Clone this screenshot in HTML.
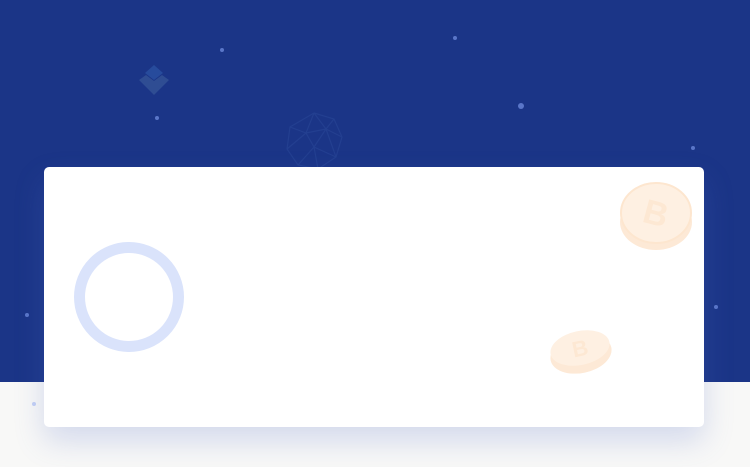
<!DOCTYPE html>
<html><head><meta charset="utf-8"><style>
html,body{margin:0;padding:0;width:750px;height:467px;overflow:hidden;background:#f8f8f7;font-family:"Liberation Sans",sans-serif}
.top{position:absolute;left:0;top:0;width:750px;height:382px;background:#1b3587}
.dot{position:absolute;border-radius:50%;background:#5a76c8}
.card{position:absolute;left:44px;top:167px;width:660px;height:260px;background:#fff;border-radius:5px;box-shadow:0 14px 30px rgba(80,110,200,0.22)}
.ring{position:absolute;left:74px;top:242px;width:88px;height:88px;border:11px solid #dae3fb;border-radius:50%}
</style></head><body>
<div class="top"></div>
<div class="dot" style="left:220px;top:48px;width:4px;height:4px"></div>
<div class="dot" style="left:453px;top:36px;width:4px;height:4px"></div>
<div class="dot" style="left:155px;top:116px;width:4px;height:4px"></div>
<div class="dot" style="left:518px;top:103px;width:6px;height:6px"></div>
<div class="dot" style="left:691px;top:146px;width:4px;height:4px"></div>
<div class="dot" style="left:25px;top:313px;width:4px;height:4px"></div>
<div class="dot" style="left:714px;top:305px;width:4px;height:4px"></div>
<div class="dot" style="left:32px;top:402px;width:4px;height:4px;background:#c4d0f5"></div>
<svg style="position:absolute;left:138px;top:64px" width="34" height="34" viewBox="0 0 34 34">
<path d="M16 1 L25 9 L16 16 L7 9 Z" fill="#274b9c"/>
<path d="M1 16 L8 11 L16 17 L24 11 L31 16 L16 31 Z" fill="#2f4d93"/>
</svg>
<svg style="position:absolute;left:284px;top:111px" width="60" height="60" viewBox="0 0 60 60" fill="none" stroke="#233f90" stroke-width="1.2">
<polygon points="30,2 50,8 58,26 52,46 34,58 14,54 3,38 6,16"/>
<path d="M30 2 L22 22 L6 16 M22 22 L3 38 M22 22 L30 36 L52 46 M30 36 L14 54 M30 36 L34 58 M30 2 L42 18 L50 8 M42 18 L58 26 M42 18 L30 36 M22 22 L42 18 M42 18 L52 46"/>
</svg>
<div class="card"></div>
<div class="ring"></div>
<svg style="position:absolute;left:618px;top:180px" width="76" height="72" viewBox="0 0 76 72">
<ellipse cx="38" cy="42" rx="36" ry="28" fill="#fde9d6"/>
<ellipse cx="38" cy="33" rx="35" ry="30" fill="#fef0e2" stroke="#fde6cf" stroke-width="2"/>
<text x="38" y="45" font-size="34" font-weight="bold" fill="#fde8d3" text-anchor="middle" font-family="Liberation Sans,sans-serif" transform="rotate(15 38 33)">B</text>
</svg>
<svg style="position:absolute;left:548px;top:326px" width="66" height="50" viewBox="0 0 66 50">
<ellipse cx="33" cy="28" rx="31" ry="19" fill="#fde9d6" transform="rotate(-12 33 28)"/>
<ellipse cx="32" cy="22" rx="30" ry="17" fill="#fef0e2" transform="rotate(-12 32 22)"/>
<text x="32" y="30" font-size="22" font-weight="bold" fill="#fde8d3" text-anchor="middle" font-family="Liberation Sans,sans-serif" transform="rotate(-12 32 22)">B</text>
</svg>
</body></html>
